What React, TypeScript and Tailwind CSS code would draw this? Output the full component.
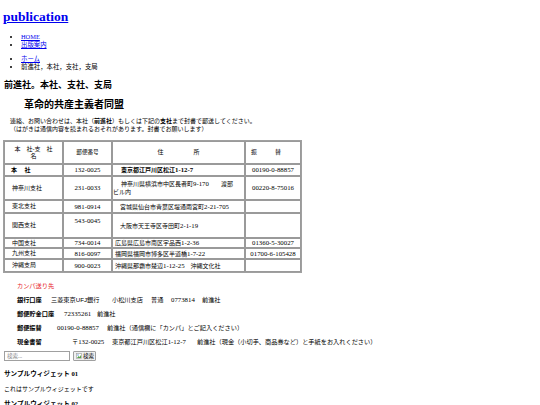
import React from 'react';

// numbers in the source render a bit larger than the kana/kanji around them
const N = ({ children }: { children: React.ReactNode }) => (
  <span className="text-[6.8px]">{children}</span>
);

const td = 'border border-[#9a9a9a] p-0';

export default function App() {
  return (
    <div className="w-[540px] h-[405px] overflow-hidden bg-white text-black pl-[3px] pt-[9px] font-['Liberation_Serif','Noto_Sans_CJK_JP',serif] text-[6.2px]">
      <h1 className="text-[13.5px] leading-[16px] font-bold">
        <a href="#" className="text-[#0000ee] underline">publication</a>
      </h1>

      <ul className="list-disc pl-[18px] mt-[8px] leading-[7.5px] text-[6.4px]">
        <li><a href="#" className="text-[#0000ee] underline">HOME</a></li>
        <li><a href="#" className="text-[#0000ee] underline">出版案内</a></li>
      </ul>

      <ul className="list-disc pl-[18px] mt-[7px] leading-[7.5px] text-[6.4px]">
        <li><a href="#" className="text-[#0000ee] underline">ホーム</a></li>
        <li>前進社，本社，支社，支局</li>
      </ul>

      <h2 className="ml-[1px] mt-[9px] text-[9px] leading-[12px] font-bold">前進社。本社、支社、支局</h2>

      <h3 className="ml-[21px] mt-[8px] text-[10px] leading-[12px] font-bold">革命的共産主義者同盟</h3>

      <p className="ml-[7px] mt-[6px] leading-[8px] text-[6px]">
        連絡、お問い合わせは、本社（<b>前進社</b>）もしくは下記の<b>支社</b>まで封書で郵送してください。
        <br />
        （はがきは通信内容を読まれるおそれがあります。封書でお願いします）
      </p>

      <table className="mt-[7px] w-[299px] table-fixed border-separate border-spacing-0 border border-[#a0a0a0] text-[6px] leading-[7px]">
        <colgroup>
          <col className="w-[59px]" />
          <col className="w-[49px]" />
          <col className="w-[133px]" />
          <col className="w-[56px]" />
        </colgroup>
        <tbody>
          <tr className="h-[23px]">
            <td className={`${td} text-center leading-[6.5px]`}>本　社-支　社<br />名</td>
            <td className={`${td} text-center text-[5.6px]`}>郵便番号</td>
            <td className={`${td} text-center`}>住　　　　　所</td>
            <td className={`${td} text-center pr-[14px]`}>振　　　替</td>
          </tr>
          <tr className="h-[12px]">
            <td className={`${td} pl-[6px] font-bold`}>本　 社</td>
            <td className={`${td} text-center`}><N>132-0025</N></td>
            <td className={`${td} pl-[8px] font-bold`}>東京都江戸川区松江<N>1-12-7</N></td>
            <td className={`${td} text-center`}><N>00190-0-88857</N></td>
          </tr>
          <tr className="h-[24px]">
            <td className={`${td} pl-[7px]`}>神奈川支社</td>
            <td className={`${td} text-center`}><N>231-0033</N></td>
            <td className={`${td} indent-[8px] leading-[8.5px]`}>
              神奈川県横浜市中区長者町<N>9-170</N>　　渡部<br />ビル内
            </td>
            <td className={`${td} text-center`}><N>00220-8-75016</N></td>
          </tr>
          <tr className="h-[13px]">
            <td className={`${td} pl-[7px]`}>東北支社</td>
            <td className={`${td} text-center`}><N>981-0914</N></td>
            <td className={`${td} pl-[7px]`}>宮城県仙台市青葉区堤通雨宮町<N>2-21-705</N></td>
            <td className={td}></td>
          </tr>
          <tr className="h-[25px]">
            <td className={`${td} pl-[7px]`}>関西支社</td>
            <td className={`${td} text-center align-top pt-[3px]`}><N>543-0045</N></td>
            <td className={`${td} pl-[7px]`}>大阪市天王寺区寺田町<N>2-1-19</N></td>
            <td className={td}></td>
          </tr>
          <tr className="h-[10px]">
            <td className={`${td} pl-[7px]`}>中国支社</td>
            <td className={`${td} text-center`}><N>734-0014</N></td>
            <td className={`${td} pl-[2px]`}>広島県広島市南区宇品西<N>1-2-36</N></td>
            <td className={`${td} text-center`}><N>01360-5-30027</N></td>
          </tr>
          <tr className="h-[11px]">
            <td className={`${td} pl-[7px]`}>九州支社</td>
            <td className={`${td} text-center`}><N>816-0097</N></td>
            <td className={`${td} pl-[2px]`}>福岡県福岡市博多区半道橋<N>1-7-22</N></td>
            <td className={`${td} text-center`}><N>01700-6-105428</N></td>
          </tr>
          <tr className="h-[13px]">
            <td className={`${td} pl-[7px]`}>沖縄支局</td>
            <td className={`${td} text-center`}><N>900-0023</N></td>
            <td className={`${td} pl-[2px]`}>沖縄県那覇市楚辺<N>1-12-25</N>　沖縄文化社</td>
            <td className={td}></td>
          </tr>
        </tbody>
      </table>

      <div className="ml-[14px] mt-[9px] leading-[8px] text-[#e8262a]">カンパ送り先</div>

      <div className="ml-[14px] mt-[6px] flex leading-[8px] whitespace-nowrap">
        <span className="w-[34px] shrink-0 font-bold">銀行口座</span>
        <span className="w-[61px] shrink-0">三菱東京<span className="font-['Liberation_Sans',sans-serif]">UFJ</span>銀行</span>
        <span className="w-[39px] shrink-0">小松川支店</span>
        <span className="w-[20px] shrink-0">普通</span>
        <span className="w-[31px] shrink-0"><N>0773814</N></span>
        <span>前進社</span>
      </div>

      <div className="ml-[14px] mt-[6px] flex leading-[8px] whitespace-nowrap">
        <span className="w-[47px] shrink-0 font-bold">郵便貯金口座</span>
        <span className="w-[33px] shrink-0"><N>72335261</N></span>
        <span>前進社</span>
      </div>

      <div className="ml-[14px] mt-[6px] flex leading-[8px] whitespace-nowrap">
        <span className="w-[40px] shrink-0 font-bold">郵便振替</span>
        <span className="w-[50px] shrink-0"><N>00190-0-88857</N></span>
        <span>前進社（通信欄に「カンパ」とご記入ください）</span>
      </div>

      <div className="ml-[14px] mt-[6px] flex leading-[8px] whitespace-nowrap">
        <span className="w-[55px] shrink-0 font-bold">現金書留</span>
        <span className="w-[40px] shrink-0">〒<N>132-0025</N></span>
        <span className="w-[85px] shrink-0">東京都江戸川区松江<N>1-12-7</N></span>
        <span>前進社（現金（小切手、商品券など）と手紙をお入れください）</span>
      </div>

      <div className="ml-[1px] mt-[5px] flex items-center gap-[3px]">
        <input
          type="text"
          placeholder="検索..."
          className="w-[66px] h-[10px] border border-[#a0a0a0] px-[2px] text-[5.5px] leading-[8px] placeholder:text-[#8a8a8a]"
        />
        <div className="h-[10px] w-[23px] flex items-center gap-[1px] border border-[#a0a0a0] rounded-[1px] bg-[#f0f0f0] pl-[2px] text-[5.5px]">
          <svg width="6" height="6" viewBox="0 0 6 6">
            <rect x="0.5" y="0.5" width="5" height="5" fill="#fff" stroke="#9a9a9a" strokeWidth="0.6" />
            <path d="M1 5 L2.5 3 L3.5 4 L5 2 L5 5 Z" fill="#5aa34a" />
            <circle cx="2" cy="2" r="0.7" fill="#4a8bd6" />
          </svg>
          <span>検索</span>
        </div>
      </div>

      <h3 className="ml-[1px] mt-[8px] leading-[10px] text-[6.6px] font-bold">サンプルウィジェット 01</h3>
      <p className="ml-[1px] mt-[6px] leading-[8px] text-[6px]">これはサンプルウィジェットです</p>
      <h3 className="ml-[1px] mt-[6px] leading-[10px] text-[6.6px] font-bold">サンプルウィジェット 02</h3>
    </div>
  );
}
